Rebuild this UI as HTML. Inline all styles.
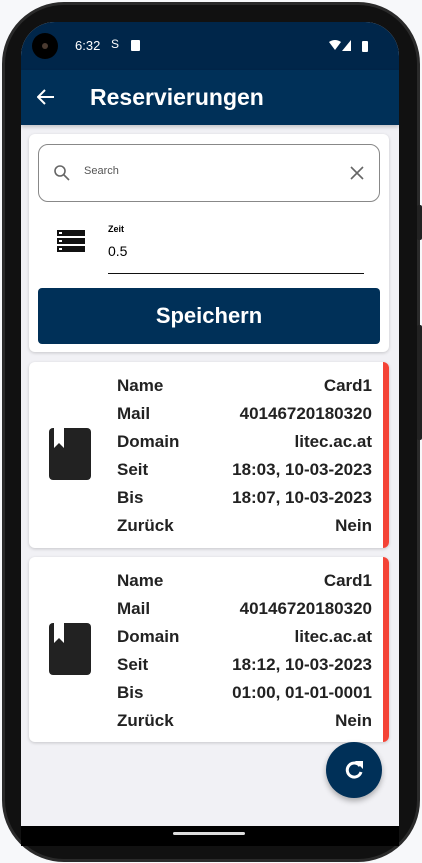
<!DOCTYPE html><html><head><style>
*{margin:0;padding:0;box-sizing:border-box}
body{width:422px;height:863px;background:#f7f8fa;position:relative;overflow:hidden;font-family:"Liberation Sans",sans-serif}
.phone{position:absolute;left:2px;top:2px;width:418px;height:860px;background:#111;border-radius:62px;border:3px solid #2a2a2a}
.btn{position:absolute;left:417px;width:5px;background:#222;border-radius:2px}
.screen{position:absolute;left:21px;top:22px;width:378px;height:804px;background:#f1f1f5;border-radius:34px 34px 0 0;overflow:hidden}
.status{height:48px;background:#00264a;color:#fff;font-size:13px;position:relative}
.cam{position:absolute;left:11px;top:11px;width:26px;height:26px;border-radius:50%;background:#000}
.cam:after{content:"";position:absolute;left:10px;top:10px;width:6px;height:6px;border-radius:50%;background:#4a3a30}
.appbar{height:55px;background:#003058;color:#fff;position:relative;box-shadow:0 2px 4px rgba(0,0,0,.2)}
.appbar h1{position:absolute;left:69px;top:14px;font-size:23px;font-weight:bold}
.card{position:absolute;left:8px;width:360px;background:#fff;border-radius:6px;box-shadow:0 1px 3px rgba(0,0,0,.18)}
.search{position:absolute;left:9px;top:10px;width:342px;height:58px;border:1px solid #888;border-radius:10px}
.save{position:absolute;left:9px;top:154px;width:342px;height:56px;background:#003058;border-radius:4px;color:#fff;font-size:22px;font-weight:bold;text-align:center;line-height:56px}
.red{position:absolute;right:0;top:0;bottom:0;width:6px;background:#f44336;border-radius:0 6px 6px 0}
.rows{position:absolute;left:88px;top:10px;width:255px;font-size:17px;font-weight:bold;color:#222}
.rows div{height:28px;line-height:28px;display:flex;justify-content:space-between}
.book{position:absolute;left:20px;top:66px;width:42px;height:52px;background:#222;border-radius:4px}
.book:after{content:"";position:absolute;left:5px;top:0;width:10px;height:20px;background:#fff;clip-path:polygon(0 0,100% 0,100% 100%,50% 75%,0 100%)}
.fab{position:absolute;left:305px;top:720px;width:56px;height:56px;border-radius:50%;background:#003058;box-shadow:0 3px 6px rgba(0,0,0,.3)}
.nav{position:absolute;left:21px;top:826px;width:378px;height:20px;background:#000}
.nav:after{content:"";position:absolute;left:152px;top:6px;width:72px;height:3px;border-radius:2px;background:#ddd}
</style></head><body>
<div class="phone"></div>
<div class="btn" style="top:205px;height:35px"></div>
<div class="btn" style="top:325px;height:115px"></div>
<div class="screen">
<div class="status"><div class="cam"></div>
<span style="position:absolute;left:54px;top:16px">6:32</span>
<span style="position:absolute;left:90px;top:15px;font-size:12px">S</span>
<div style="position:absolute;left:110px;top:18px;width:9px;height:11px;background:#fff;border-radius:1px"></div>
<svg style="position:absolute;left:308px;top:18px" width="40" height="12"><path d="M0 2 Q6 -2 12 2 L6 10Z" fill="#fff"/><path d="M22 0 L22 11 L13 11Z" fill="#fff"/><rect x="33" y="1" width="6" height="11" rx="1" fill="#fff"/></svg>
</div>
<div class="appbar">
<svg style="position:absolute;left:16px;top:19px" width="18" height="16" viewBox="0 0 18 16"><path d="M17 8H2M8 1L1 8l7 7" stroke="#fff" stroke-width="2" fill="none"/></svg>
<h1>Reservierungen</h1></div>
<div class="card" style="top:112px;height:218px">
<div class="search">
<svg style="position:absolute;left:14px;top:19px" width="18" height="18"><circle cx="7" cy="7" r="5" stroke="#666" stroke-width="1.6" fill="none"/><path d="M11 11l5 5" stroke="#666" stroke-width="1.6"/></svg>
<span style="position:absolute;left:45px;top:20px;font-size:11px;color:#555">Search</span>
<svg style="position:absolute;left:311px;top:21px" width="14" height="14"><path d="M1 1l12 12M13 1L1 13" stroke="#666" stroke-width="1.6"/></svg>
</div>
<svg style="position:absolute;left:28px;top:96px" width="28" height="22"><rect y="0" width="28" height="6" fill="#111"/><rect y="8" width="28" height="6" fill="#111"/><rect y="16" width="28" height="6" fill="#111"/><rect x="2" y="2" width="3" height="2" fill="#fff"/><rect x="2" y="10" width="3" height="2" fill="#fff"/><rect x="2" y="18" width="3" height="2" fill="#fff"/></svg>
<span style="position:absolute;left:79px;top:90px;font-size:9px;font-weight:bold">Zeit</span>
<span style="position:absolute;left:79px;top:109px;font-size:14px">0.5</span>
<div style="position:absolute;left:79px;top:139px;width:256px;height:1px;background:#111"></div>
<div class="save">Speichern</div>
</div>
<div class="card" style="top:340px;height:186px"><div class="red"></div><div class="book"></div>
<div class="rows"><div><span>Name</span><span>Card1</span></div><div><span>Mail</span><span>40146720180320</span></div><div><span>Domain</span><span>litec.ac.at</span></div><div><span>Seit</span><span>18:03, 10-03-2023</span></div><div><span>Bis</span><span>18:07, 10-03-2023</span></div><div><span>Zurück</span><span>Nein</span></div></div></div>
<div class="card" style="top:535px;height:185px"><div class="red"></div><div class="book"></div>
<div class="rows"><div><span>Name</span><span>Card1</span></div><div><span>Mail</span><span>40146720180320</span></div><div><span>Domain</span><span>litec.ac.at</span></div><div><span>Seit</span><span>18:12, 10-03-2023</span></div><div><span>Bis</span><span>01:00, 01-01-0001</span></div><div><span>Zurück</span><span>Nein</span></div></div></div>
<div class="fab"><svg style="position:absolute;left:17px;top:17px" width="22" height="22" viewBox="0 0 22 22"><path d="M17 7A7 7 0 1 0 18 13" stroke="#fff" stroke-width="3" fill="none"/><path d="M12 2h8v8z" fill="#fff"/></svg></div>
</div>
<div class="nav"></div>
</body></html>
